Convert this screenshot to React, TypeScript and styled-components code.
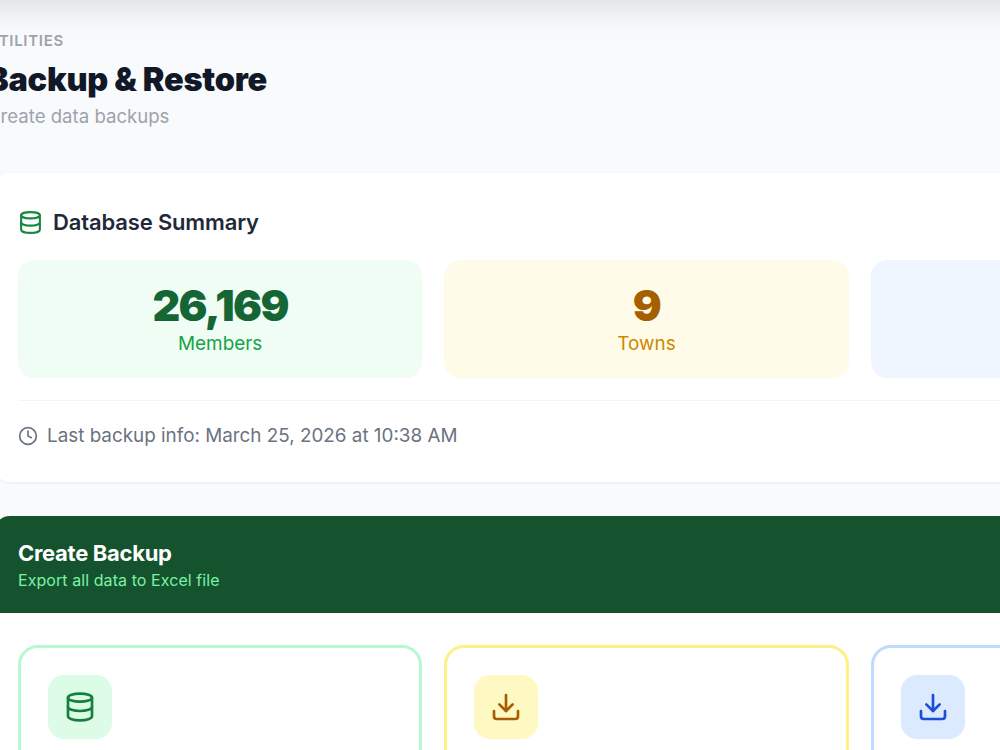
import React from "react";
import styled, { createGlobalStyle } from "styled-components";
import { Clock, Database, Download } from "lucide-react";

type Tone = "green" | "yellow" | "blue";

const tones = {
  green: { soft: "#f0fdf4", tile: "#dcfce7", line: "#b9f8cf", value: "#166534", label: "#16a34a", icon: "#15803d" },
  yellow: { soft: "#fefce8", tile: "#fef9c2", line: "#fff085", value: "#a65f00", label: "#d08700", icon: "#a65f00" },
  blue: { soft: "#eff6ff", tile: "#dbeafe", line: "#bedbff", value: "#1e40af", label: "#2563eb", icon: "#1d4ed8" },
};

const GlobalStyle = createGlobalStyle`
  html, body {
    margin: 0;
    height: 750px;
    overflow: hidden;
    background: #f9fafb;
    font-family: Inter, "Liberation Sans", sans-serif;
  }
`;

const Page = styled.main`
  width: 1305px;
  height: 750px;
  margin-left: -6px;
  padding-top: 33px;
  box-sizing: border-box;
  background: linear-gradient(#e4e5e7 0, #f1f2f4 16px, #f7f8fa 30px, #f9fafb 44px);
`;

const Header = styled.header`
  height: 140px;
  margin-left: -7px;
`;

const Eyebrow = styled.div`
  font-size: 15px;
  line-height: 16px;
  font-weight: 600;
  letter-spacing: 0.7px;
  color: #9ca3af;
  text-transform: uppercase;
`;

const Title = styled.h1`
  margin: 10px 0 0;
  font-size: 32.5px;
  line-height: 42px;
  font-weight: 900;
  letter-spacing: -0.25px;
  color: #111827;
`;

const Subtitle = styled.p`
  margin: 3px 0 0;
  font-size: 18.6px;
  line-height: 24px;
  color: #9ca3af;
`;

const Card = styled.section`
  background: #fff;
  border-radius: 16px;
  box-shadow: 0 1px 3px rgba(17, 24, 39, 0.07);
  overflow: hidden;
`;

const SummaryCard = styled(Card)`
  padding: 35px 24px 0;
  height: 309px;
  box-sizing: border-box;
  margin-bottom: 34px;
`;

const SummaryHeading = styled.h2`
  display: flex;
  align-items: center;
  gap: 10px;
  margin: 0 0 24px;
  font-size: 22px;
  line-height: 28px;
  font-weight: 600;
  letter-spacing: -0.15px;
  color: #1f2937;
`;

const StatGrid = styled.div`
  display: grid;
  grid-template-columns: repeat(3, 1fr);
  gap: 22px;
`;

const Stat = styled.div<{ $tone: Tone }>`
  height: 118px;
  display: flex;
  flex-direction: column;
  align-items: center;
  justify-content: center;
  border-radius: 16px;
  background: ${(p) => tones[p.$tone].soft};
`;

const StatValue = styled.div<{ $tone: Tone }>`
  font-size: 43px;
  line-height: 48px;
  font-weight: 900;
  letter-spacing: -1.6px;
  color: ${(p) => tones[p.$tone].value};
`;

const StatLabel = styled.div<{ $tone: Tone }>`
  margin-top: 1px;
  font-size: 18.9px;
  line-height: 28px;
  color: ${(p) => tones[p.$tone].label};
`;

const LastBackup = styled.div`
  display: flex;
  align-items: center;
  gap: 9px;
  margin-top: 22px;
  padding-top: 22px;
  border-top: 1px solid #f3f4f6;
  font-size: 18.85px;
  line-height: 26px;
  color: #6b7280;
`;

const Banner = styled.div`
  height: 97px;
  box-sizing: border-box;
  padding: 23px 24px 0;
  background: #14532d;
`;

const BannerTitle = styled.h2`
  margin: 0;
  font-size: 22px;
  line-height: 28px;
  font-weight: 700;
  letter-spacing: -0.3px;
  color: #fff;
`;

const BannerText = styled.p`
  margin: 0;
  font-size: 16px;
  line-height: 26px;
  letter-spacing: 0.07px;
  color: #7bf1a8;
`;

const ActionGrid = styled.div`
  display: grid;
  grid-template-columns: repeat(3, 1fr);
  gap: 22px;
  padding: 32px 24px;
`;

const ActionCard = styled.div<{ $tone: Tone }>`
  min-height: 240px;
  padding: 27px;
  border: 3px solid ${(p) => tones[p.$tone].line};
  border-radius: 20px;
`;

const IconTile = styled.div<{ $tone: Tone }>`
  width: 64px;
  height: 64px;
  display: flex;
  align-items: center;
  justify-content: center;
  border-radius: 16px;
  background: ${(p) => tones[p.$tone].tile};
  color: ${(p) => tones[p.$tone].icon};
`;

export default function App() {
  return (
    <Page>
      <GlobalStyle />
      <Header>
        <Eyebrow>Utilities</Eyebrow>
        <Title>Backup &amp; Restore</Title>
        <Subtitle>Create data backups</Subtitle>
      </Header>

      <SummaryCard>
        <SummaryHeading>
          <Database size={25} color="#16873f" />
          Database Summary
        </SummaryHeading>
        <StatGrid>
          <Stat $tone="green">
            <StatValue $tone="green">26,169</StatValue>
            <StatLabel $tone="green">Members</StatLabel>
          </Stat>
          <Stat $tone="yellow">
            <StatValue $tone="yellow">9</StatValue>
            <StatLabel $tone="yellow">Towns</StatLabel>
          </Stat>
          <Stat $tone="blue" />
        </StatGrid>
        <LastBackup>
          <Clock size={20} />
          Last backup info: March 25, 2026 at 10:38 AM
        </LastBackup>
      </SummaryCard>

      <Card>
        <Banner>
          <BannerTitle>Create Backup</BannerTitle>
          <BannerText>Export all data to Excel file</BannerText>
        </Banner>
        <ActionGrid>
          <ActionCard $tone="green">
            <IconTile $tone="green">
              <Database size={32} />
            </IconTile>
          </ActionCard>
          <ActionCard $tone="yellow">
            <IconTile $tone="yellow">
              <Download size={32} />
            </IconTile>
          </ActionCard>
          <ActionCard $tone="blue">
            <IconTile $tone="blue">
              <Download size={32} />
            </IconTile>
          </ActionCard>
        </ActionGrid>
      </Card>
    </Page>
  );
}
